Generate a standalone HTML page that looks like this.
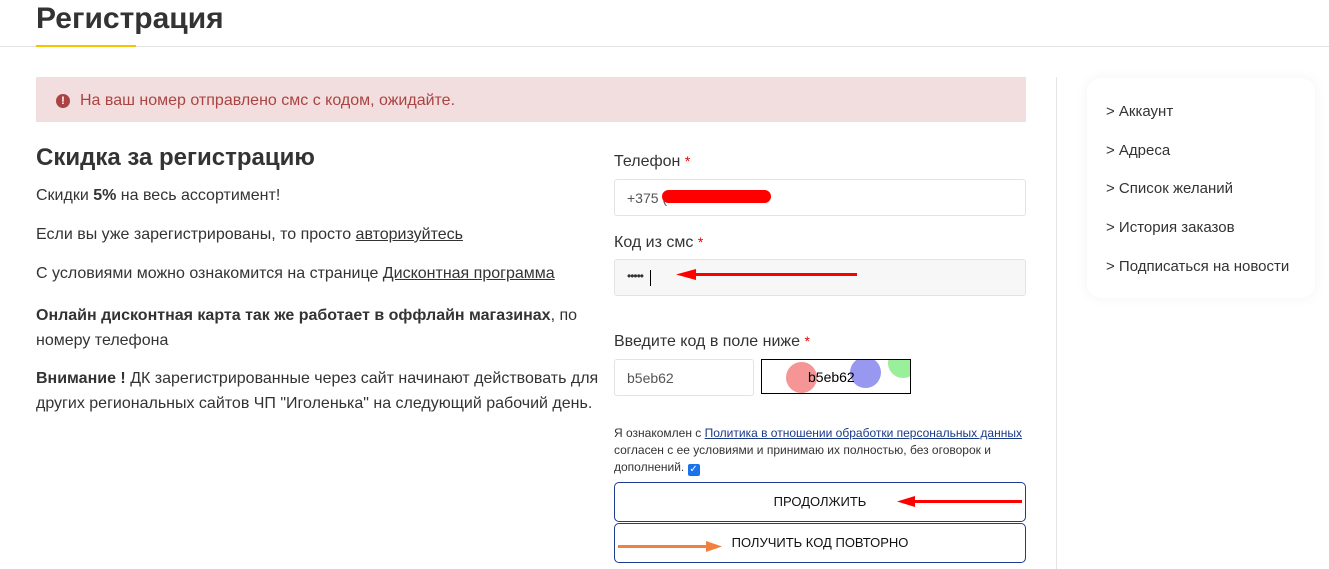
<!DOCTYPE html>
<html><head><meta charset="utf-8"><style>
body{margin:0;width:1329px;height:569px;overflow:hidden;background:#fff;font-family:"Liberation Sans",Arial,sans-serif;color:#333;position:relative}
.a{position:absolute;white-space:nowrap}
p{margin:0}
.inp{position:absolute;border:1px solid #e3e3e3;border-radius:3px;background:#fff;box-sizing:border-box}
.lbl{font-size:16px;color:#333}
.lbl b{color:#e00;font-weight:normal;font-size:14px}
.btn{position:absolute;left:614px;width:412px;height:40px;border:1px solid #1e3c8c;border-radius:5px;box-sizing:border-box;font-size:13px;color:#111;text-align:center;line-height:38px}
.side{font-size:15px;color:#333;left:1106px}
a{color:#333}
</style></head><body>
<div class="a" style="left:36px;top:1px;font-size:30px;font-weight:bold;color:#333;line-height:36px">Регистрация</div>
<div class="a" style="left:0;top:46px;width:1329px;height:1px;background:#e2e2e2"></div>
<div class="a" style="left:36px;top:45px;width:100px;height:2px;background:#f5c400"></div>

<div class="a" style="left:36px;top:77px;width:990px;height:45px;background:#f2dede"></div>
<div class="a" style="left:56px;top:94px;width:14px;height:14px;border-radius:50%;background:#a94442;color:#fff;font-size:11px;font-weight:bold;text-align:center;line-height:14px">!</div>
<div class="a" style="left:80px;top:92px;font-size:16px;color:#a94442">На ваш номер отправлено смс с кодом, ожидайте.</div>

<div class="a" style="left:36px;top:144px;font-size:24px;font-weight:bold;color:#333">Скидка за регистрацию</div>
<div class="a" style="left:36px;top:187px;font-size:16px">Скидки <b>5%</b> на весь ассортимент!</div>
<div class="a" style="left:36px;top:226px;font-size:16px">Если вы уже зарегистрированы, то просто <a href="#">авторизуйтесь</a></div>
<div class="a" style="left:36px;top:265px;font-size:16px">С условиями можно ознакомится на странице <a href="#">Дисконтная программа</a></div>
<div class="a" style="left:36px;top:303px;font-size:16px;line-height:25px;white-space:normal;width:560px"><b>Онлайн дисконтная карта так же работает в оффлайн магазинах</b>, по номеру телефона</div>
<div class="a" style="left:36px;top:366px;font-size:16px;line-height:25px;white-space:normal;width:570px"><b>Внимание !</b> ДК зарегистрированные через сайт начинают действовать для других региональных сайтов ЧП "Иголенька" на следующий рабочий день.</div>

<div class="a lbl" style="left:614px;top:153px">Телефон <b>*</b></div>
<div class="inp" style="left:614px;top:179px;width:412px;height:37px"></div>
<div class="a" style="left:627px;top:190px;font-size:14px;color:#555">+375 (</div>
<div class="a" style="left:662px;top:190px;width:109px;height:13px;border-radius:7px;background:#f00"></div>

<div class="a lbl" style="left:614px;top:234px">Код из смс <b>*</b></div>
<div class="inp" style="left:614px;top:259px;width:412px;height:37px;background:#f7f7f7"></div>
<div class="a" style="left:627px;top:269px;font-size:12px;color:#333;letter-spacing:-1px">•••••</div>
<div class="a" style="left:650px;top:270px;width:1px;height:16px;background:#000"></div>
<div class="a" style="left:690px;top:273px;width:167px;height:3px;background:#f00"></div>
<svg class="a" style="left:676px;top:268px" width="20" height="13"><polygon points="0,6.5 20,1 20,12" fill="#f00"/></svg>

<div class="a lbl" style="left:614px;top:333px">Введите код в поле ниже <b>*</b></div>
<div class="inp" style="left:614px;top:359px;width:140px;height:37px"></div>
<div class="a" style="left:627px;top:370px;font-size:14px;color:#555">b5eb62</div>
<div class="a" style="left:761px;top:359px;width:150px;height:35px;border:1px solid #000;box-sizing:border-box;overflow:hidden;background:#fff">
<div class="a" style="left:24px;top:2px;width:31px;height:31px;border-radius:50%;background:#f59595"></div>
<div class="a" style="left:88px;top:-3px;width:31px;height:31px;border-radius:50%;background:#9898f0"></div>
<div class="a" style="left:126px;top:-12px;width:30px;height:30px;border-radius:50%;background:#9af09a"></div>
<div class="a" style="left:46px;top:9px;font-size:14px;color:#000">b5eb62</div>
</div>

<div class="a" style="left:614px;top:425px;font-size:12px;line-height:17px;white-space:normal;width:420px;color:#333">Я ознакомлен с <a href="#" style="color:#1a3a8a">Политика в отношении обработки персональных данных</a> согласен с ее условиями и принимаю их полностью, без оговорок и дополнений. <span style="display:inline-block;width:12px;height:12px;background:#1a73e8;border-radius:2px;color:#fff;font-size:10px;line-height:12px;text-align:center;vertical-align:-1px">✓</span></div>

<div class="btn" style="top:482px">ПРОДОЛЖИТЬ</div>
<div class="a" style="left:910px;top:500px;width:112px;height:3px;background:#f00"></div>
<svg class="a" style="left:897px;top:496px" width="18" height="11"><polygon points="0,5.5 18,0 18,11" fill="#f00"/></svg>
<div class="btn" style="top:523px">ПОЛУЧИТЬ КОД ПОВТОРНО</div>
<div class="a" style="left:618px;top:545px;width:92px;height:3px;background:#f08040"></div>
<svg class="a" style="left:706px;top:541px" width="16" height="11"><polygon points="16,5.5 0,0 0,11" fill="#f08040"/></svg>

<div class="a" style="left:1056px;top:77px;width:1px;height:492px;background:#e5e5e5"></div>
<div class="a" style="left:1087px;top:78px;width:228px;height:220px;background:#fff;border-radius:14px;box-shadow:0 0 14px rgba(0,0,0,0.05)"></div>
<div class="a side" style="top:103px">&gt; Аккаунт</div>
<div class="a side" style="top:142px">&gt; Адреса</div>
<div class="a side" style="top:180px">&gt; Список желаний</div>
<div class="a side" style="top:219px">&gt; История заказов</div>
<div class="a side" style="top:258px">&gt; Подписаться на новости</div>
</body></html>
